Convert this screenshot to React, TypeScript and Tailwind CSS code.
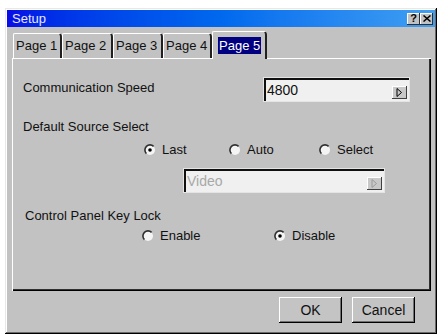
import React from "react";

const font = { fontFamily: '"Liberation Sans", Arial, sans-serif' };

function Radio({ checked }: { checked?: boolean }) {
  return (
    <svg width="12" height="12" viewBox="0 0 12 12" className="shrink-0">
      <circle cx="6" cy="6" r="5" fill="#f4f4f4" />
      <path d="M9.6 2.4 A5 5 0 0 0 2.4 9.6" fill="none" stroke="#303030" strokeWidth="1.6" />
      {checked && <circle cx="6" cy="6" r="1.8" fill="#000" />}
    </svg>
  );
}

function ArrowBtn({ disabled }: { disabled?: boolean }) {
  const c = disabled ? "#9a9a9a" : "#000";
  return (
    <div className="w-[15px] h-[13px] bg-[#c8c8c8] flex items-center justify-center shadow-[inset_-1px_-1px_#404040,inset_1px_1px_#fff]">
      <svg width="7" height="9" viewBox="0 0 7 9">
        <path d="M1 0.5 L5.5 4.5 L1 8.5 Z" fill="none" stroke={c} strokeWidth="1" />
      </svg>
    </div>
  );
}

function Field({ text, disabled, w }: { text: string; disabled?: boolean; w: string }) {
  return (
    <div className={`${w} h-[25px] p-[1px] bg-[#e4e4e4]`}>
      <div className="h-full flex items-stretch border-t-2 border-l-2 border-[#101010] bg-[#f0f0f0]">
        <span
          className={`flex-1 pl-[1px] pt-[2px] text-[14px] leading-[17px] ${disabled ? "text-[#a8a8a8]" : "text-[#111]"}`}
        >
          {text}
        </span>
        <div className="pr-[2px] pt-[6px]">
          <ArrowBtn disabled={disabled} />
        </div>
      </div>
    </div>
  );
}

function Tab({ label, w }: { label: string; w: string }) {
  return (
    <div
      className={`${w} h-[25px] flex items-center pl-[2px] text-[13px] text-[#111] border-l border-t border-white border-r-2 border-r-[#202020] rounded-tl-[2px] rounded-tr-[4px]`}
    >
      {label}
    </div>
  );
}

function Option({ label, checked, w }: { label: string; checked?: boolean; w?: string }) {
  return (
    <div className={`${w ?? ""} flex items-center gap-[6px] text-[13px] text-[#111]`}>
      <Radio checked={checked} />
      <span>{label}</span>
    </div>
  );
}

function Button({ label }: { label: string }) {
  return (
    <div className="w-[63px] h-[26px] flex items-center justify-center text-[14px] text-[#111] bg-[#c4c4c4] shadow-[inset_-1px_-1px_#000,inset_1px_1px_#fff,inset_-2px_-2px_#707070]">
      {label}
    </div>
  );
}

export default function App() {
  return (
    <div className="w-[440px] h-[335px] bg-white pt-[8px] pl-[5px] overflow-hidden" style={font}>
      <div className="w-[432px] h-[326px] bg-[#c2c2c2] p-[2px] flex flex-col shadow-[inset_-1px_-1px_#000,inset_1px_1px_#e8e8e8,inset_-2px_-2px_#6a6a6a,inset_2px_2px_#fff]">
        {/* title bar */}
        <div className="h-[17px] shrink-0 flex items-center justify-between pl-[5px] pr-[2px] bg-gradient-to-r from-[#0a0ae6] to-[#3f9ff2]">
          <span className="text-[13px] leading-none text-[#e8e8ff]">Setup</span>
          <div className="flex">
            <div className="w-[13px] h-[12px] bg-[#c2c2c2] flex items-center justify-center text-[11px] font-bold leading-none text-black shadow-[inset_-1px_-1px_#303030,inset_1px_1px_#fff]">
              ?
            </div>
            <div className="w-[13px] h-[12px] bg-[#c2c2c2] flex items-center justify-center shadow-[inset_-1px_-1px_#303030,inset_1px_1px_#fff]">
              <svg width="8" height="7" viewBox="0 0 8 7">
                <path d="M0.5 0.5 L7.5 6.5 M7.5 0.5 L0.5 6.5" stroke="#000" strokeWidth="1.5" />
              </svg>
            </div>
          </div>
        </div>

        {/* tabs */}
        <div className="h-[31px] shrink-0 flex items-end pl-[6px]">
          <Tab label="Page 1" w="w-[49px]" />
          <Tab label="Page 2" w="w-[51px]" />
          <Tab label="Page 3" w="w-[50px]" />
          <Tab label="Page 4" w="w-[49px]" />
          <div className="relative z-10 w-[55px] h-[28px] -mb-[1px] bg-[#c2c2c2] flex items-center pl-[5px] border-l border-t border-white border-r-2 border-r-[#202020] rounded-tl-[2px] rounded-tr-[4px]">
            <span className="bg-[#000080] text-white text-[13px] leading-[17px] px-[1px]">Page 5</span>
          </div>
        </div>

        {/* panel */}
        <div className="ml-[5px] w-[419px] h-[233px] shrink-0 flex flex-col pt-[19px] pl-[11px] shadow-[inset_1px_1px_#fff,inset_-1px_-1px_#000,inset_-2px_-2px_#303030]">
          <div className="flex items-center">
            <span className="w-[240px] text-[13px] text-[#111] -mt-[4px]">Communication Speed</span>
            <Field text="4800" w="w-[147px]" />
          </div>

          <div className="mt-[17px] text-[13px] leading-[16px] text-[#111]">Default Source Select</div>

          <div className="mt-[7px] h-[16px] flex items-center pl-[121px]">
            <Option label="Last" checked w="w-[85px]" />
            <Option label="Auto" w="w-[90px]" />
            <Option label="Select" />
          </div>

          <div className="mt-[10px] pl-[160px]">
            <Field text="Video" disabled w="w-[202px]" />
          </div>

          <div className="mt-[15px] ml-[2px] text-[13px] leading-[16px] text-[#111]">Control Panel Key Lock</div>

          <div className="mt-[4px] h-[16px] flex items-center pl-[119px]">
            <Option label="Enable" w="w-[132px]" />
            <Option label="Disable" checked />
          </div>
        </div>

        {/* buttons */}
        <div className="mt-[6px] flex justify-end gap-[10px] pr-[20px]">
          <Button label="OK" />
          <Button label="Cancel" />
        </div>
      </div>
    </div>
  );
}
